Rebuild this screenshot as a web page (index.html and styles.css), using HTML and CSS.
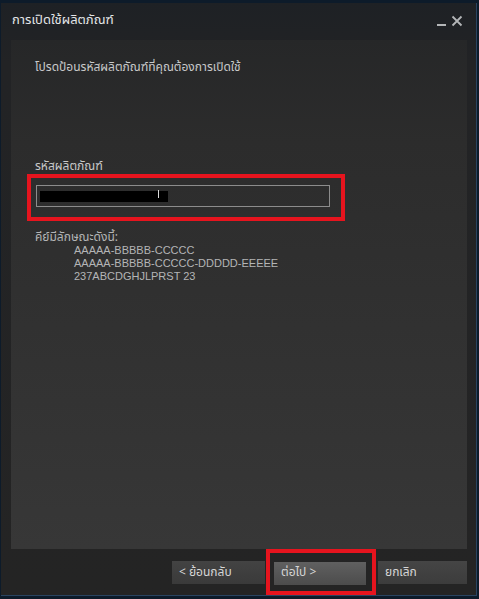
FILE: index.html
```html
<!DOCTYPE html>
<html lang="th">
<head>
<meta charset="utf-8">
<link rel="stylesheet" href="styles.css">
</head>
<body>
<div class="desk">
  <div class="window">
    <div class="titlebar">
      <span class="title">การเปิดใช้ผลิตภัณฑ์</span>
      <div class="controls">
        <span class="min"></span>
        <svg class="close" width="12" height="12" viewBox="0 0 12 12"><path d="M1.5 1.5L10.5 10.5M10.5 1.5L1.5 10.5" stroke="#b4b6b8" stroke-width="1.8"/></svg>
      </div>
    </div>
    <div class="panel">
      <p class="intro">โปรดป้อนรหัสผลิตภัณฑ์ที่คุณต้องการเปิดใช้</p>
      <label class="label">รหัสผลิตภัณฑ์</label>
      <div class="highlight input-hl">
        <div class="input"><span class="redact"></span><span class="caret"></span></div>
      </div>
      <p class="hint">คีย์มีลักษณะดังนี้:</p>
      <div class="keys">
        <div>AAAAA-BBBBB-CCCCC</div>
        <div>AAAAA-BBBBB-CCCCC-DDDDD-EEEEE</div>
        <div>237ABCDGHJLPRST 23</div>
      </div>
    </div>
    <div class="footer">
      <button class="btn back">&lt; ย้อนกลับ</button>
      <div class="highlight btn-hl"><button class="btn next">ต่อไป &gt;</button></div>
      <button class="btn cancel">ยกเลิก</button>
    </div>
  </div>
</div>
</body>
</html>
```
FILE: styles.css
```css
html, body {
  margin: 0;
  padding: 0;
  background: #0d1b2a;
  width: 479px;
  height: 599px;
  overflow: hidden;
}
.desk {
  padding: 3px 2px 3px 1px;
  box-sizing: border-box;
  height: 599px;
}
.window {
  box-sizing: border-box;
  width: 476px;
  height: 593px;
  background: linear-gradient(#1e2125 0px, #222325 60px, #242424 100%);
  border-right: 1px solid #2a4460;
  border-bottom: 1px solid #2a4460;
  display: flex;
  flex-direction: column;
  font-family: "Tahoma", "Noto Sans Thai", "Loma", "Garuda", "Liberation Sans", sans-serif;
}
.titlebar {
  height: 37px;
  display: flex;
  align-items: flex-start;
  justify-content: space-between;
  padding: 9px 13px 0 11px;
  box-sizing: border-box;
}
.title {
  color: #e4e6e8;
  font-size: 13px;
  line-height: 16px;
}
.controls {
  display: flex;
  align-items: flex-end;
  gap: 5px;
  padding-top: 3px;
}
.min {
  display: block;
  width: 9px;
  height: 2px;
  background: #b4b6b8;
  margin-bottom: 1px;
}
.panel {
  margin: 0 9px 0 10px;
  height: 512px;
  background: linear-gradient(#262728, #2c2c2c 20%, #373737);
  padding: 19px 0 0 24px;
  box-sizing: border-box;
  display: flex;
  flex-direction: column;
  align-items: flex-start;
}
.intro {
  margin: 0;
  color: #c8c9ca;
  font-size: 12px;
  line-height: 16px;
}
.label {
  margin-top: 84px;
  color: #c8c9ca;
  font-size: 12px;
  line-height: 14px;
}
.highlight {
  border: 4px solid #e6141e;
}
.input-hl {
  margin: 1px 0 0 -8px;
  width: 318px;
  height: 47px;
  box-sizing: border-box;
  padding: 7px 11px 0 5px;
}
.input {
  height: 22px;
  border: 1px solid #8c8c8c;
  box-sizing: border-box;
  position: relative;
}
.redact {
  position: absolute;
  left: 3px;
  top: 5px;
  width: 128px;
  height: 11px;
  background: #000;
}
.caret {
  position: absolute;
  left: 121px;
  top: 4px;
  width: 1px;
  height: 8px;
  background: #ddd;
}
.hint {
  margin: 10px 0 0;
  color: #b4b5b6;
  font-size: 12px;
  line-height: 13px;
}
.keys {
  padding-left: 39px;
  color: #b4b5b6;
  font-family: "Liberation Sans", Arial, sans-serif;
  font-size: 11px;
  line-height: 13px;
}
.footer {
  flex: 1;
  display: flex;
  justify-content: flex-end;
  align-items: flex-start;
  padding: 8px 9px 0 0;
  box-sizing: border-box;
}
.btn {
  font-family: "Tahoma", "Noto Sans Thai", "Loma", "Garuda", "Liberation Sans", sans-serif;
  font-size: 12px;
  color: #d6d6d6;
  border: none;
  height: 23px;
  width: 93px;
  text-align: left;
  padding: 0 0 2px 7px;
  margin: 0;
  background: linear-gradient(#434343, #3a3a3a);
}
.back {
  margin-top: 4px;
}
.btn-hl {
  margin: -8px 2px 0 1px;
  padding: 6px 6px 9px 4px;
  height: 46px;
  box-sizing: border-box;
}
.next {
  width: 92px;
  background: linear-gradient(#606060, #4c4c4c);
}
.cancel {
  margin-top: 4px;
  width: 89px;
  background: linear-gradient(#454545, #3c3c3c);
}
```
